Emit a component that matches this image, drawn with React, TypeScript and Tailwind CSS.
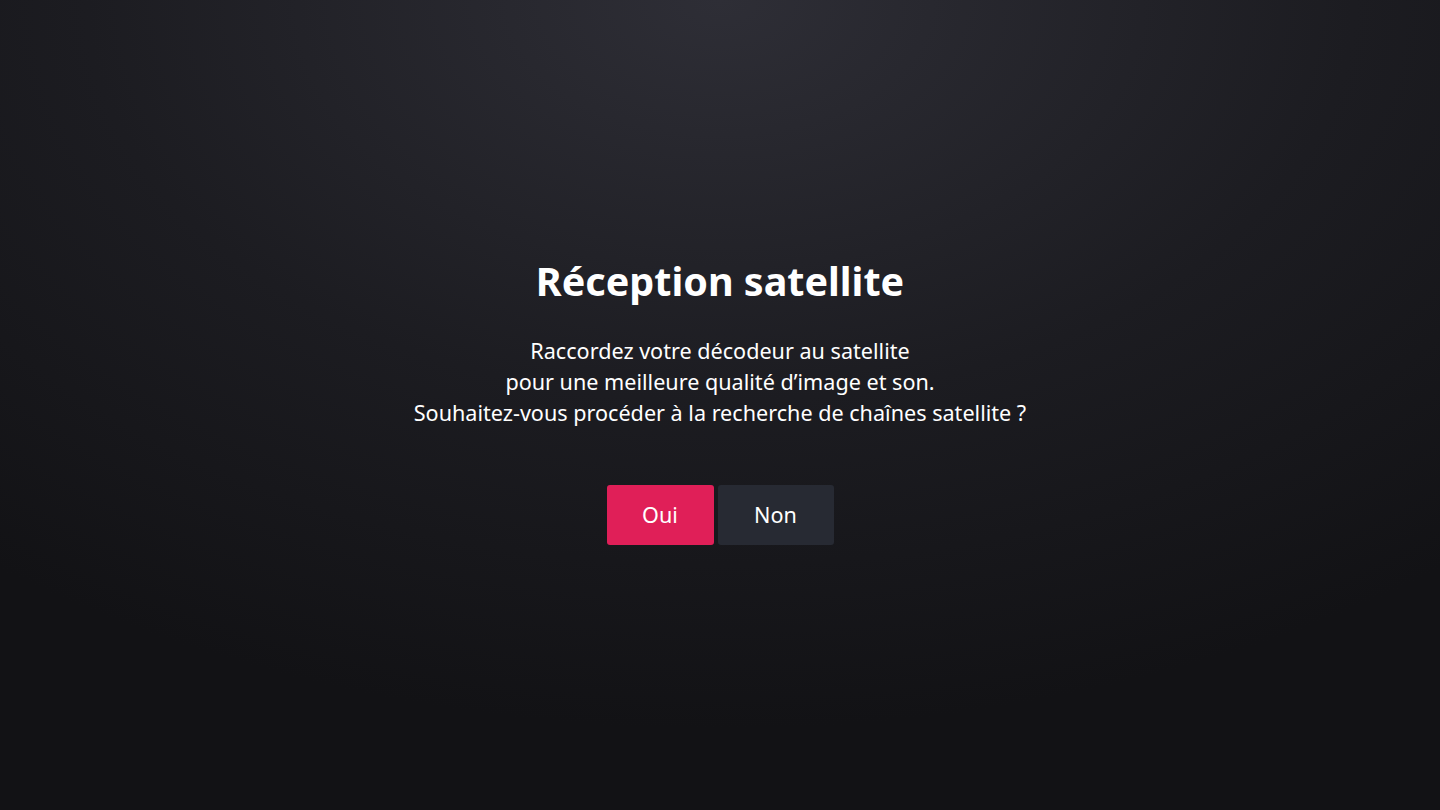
import React from "react";

const App: React.FC = () => {
  return (
    <main
      className="flex h-[810px] w-full flex-col items-center bg-[radial-gradient(ellipse_80%_90%_at_50%_0%,#2e2e36_0%,#1c1c21_55%,#121215_100%)] text-white"
      style={{ fontFamily: '"Noto Sans", "Open Sans", sans-serif' }}
    >
      <h1 className="mt-[255px] text-[39.5px] font-bold leading-[52px]">Réception satellite</h1>
      <div className="mt-[28px] text-center text-[21.6px] leading-[31px]">
        <p>Raccordez votre décodeur au satellite</p>
        <p>pour une meilleure qualité d’image et son.</p>
        <p>Souhaitez-vous procéder à la recherche de chaînes satellite ?</p>
      </div>
      <div className="mt-[57px] flex gap-1">
        <button className="h-[60px] w-[107px] rounded-[3px] bg-[#e01f58] text-[21.6px]">Oui</button>
        <button className="h-[60px] w-[116px] rounded-[3px] bg-[#272a33] text-[21.6px]">Non</button>
      </div>
    </main>
  );
};

export default App;
